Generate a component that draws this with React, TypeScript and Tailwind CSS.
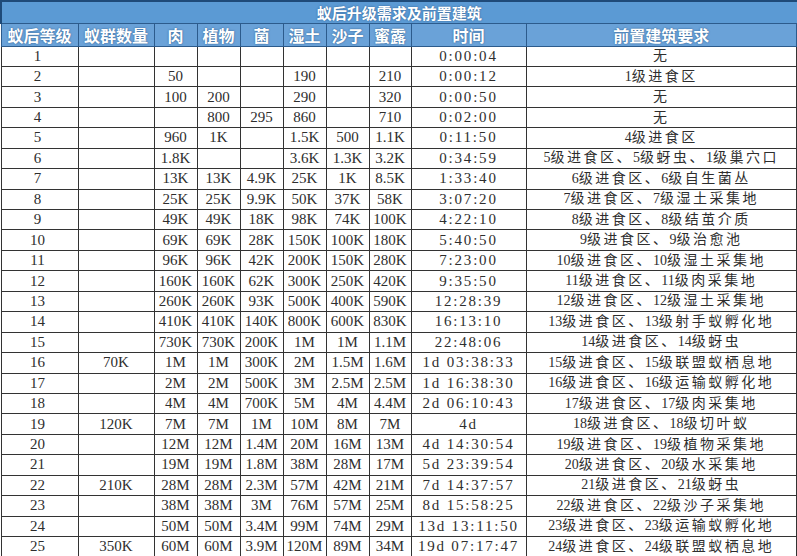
const headers = ["蚁后等级", "蚁群数量", "肉", "植物", "菌", "湿土", "沙子", "蜜露", "时间", "前置建筑要求"];

const widths = ["w-[77px]", "w-[76px]", "w-[43px]", "w-[43px]", "w-[43px]", "w-[43px]", "w-[43px]", "w-[42px]", "w-[115px]", "w-auto"];

// level, colony, meat, plant, fungus, soil, sand, honeydew, time, requirement
const rows: string[][] = [
  ["1", "", "", "", "", "", "", "", "0:00:04", "无"],
  ["2", "", "50", "", "", "190", "", "210", "0:00:12", "1级进食区"],
  ["3", "", "100", "200", "", "290", "", "320", "0:00:50", "无"],
  ["4", "", "", "800", "295", "860", "", "710", "0:02:00", "无"],
  ["5", "", "960", "1K", "", "1.5K", "500", "1.1K", "0:11:50", "4级进食区"],
  ["6", "", "1.8K", "", "", "3.6K", "1.3K", "3.2K", "0:34:59", "5级进食区、5级蚜虫、1级巢穴口"],
  ["7", "", "13K", "13K", "4.9K", "25K", "1K", "8.5K", "1:33:40", "6级进食区、6级自生菌丛"],
  ["8", "", "25K", "25K", "9.9K", "50K", "37K", "58K", "3:07:20", "7级进食区、7级湿土采集地"],
  ["9", "", "49K", "49K", "18K", "98K", "74K", "100K", "4:22:10", "8级进食区、8级结茧介质"],
  ["10", "", "69K", "69K", "28K", "150K", "100K", "180K", "5:40:50", "9级进食区、9级治愈池"],
  ["11", "", "96K", "96K", "42K", "200K", "150K", "280K", "7:23:00", "10级进食区、10级湿土采集地"],
  ["12", "", "160K", "160K", "62K", "300K", "250K", "420K", "9:35:50", "11级进食区、11级肉采集地"],
  ["13", "", "260K", "260K", "93K", "500K", "400K", "590K", "12:28:39", "12级进食区、12级湿土采集地"],
  ["14", "", "410K", "410K", "140K", "800K", "600K", "830K", "16:13:10", "13级进食区、13级射手蚁孵化地"],
  ["15", "", "730K", "730K", "200K", "1M", "1M", "1.1M", "22:48:06", "14级进食区、14级蚜虫"],
  ["16", "70K", "1M", "1M", "300K", "2M", "1.5M", "1.6M", "1d 03:38:33", "15级进食区、15级联盟蚁栖息地"],
  ["17", "", "2M", "2M", "500K", "3M", "2.5M", "2.5M", "1d 16:38:30", "16级进食区、16级运输蚁孵化地"],
  ["18", "", "4M", "4M", "700K", "5M", "4M", "4.4M", "2d 06:10:43", "17级进食区、17级肉采集地"],
  ["19", "120K", "7M", "7M", "1M", "10M", "8M", "7M", "4d", "18级进食区、18级切叶蚁"],
  ["20", "", "12M", "12M", "1.4M", "20M", "16M", "13M", "4d 14:30:54", "19级进食区、19级植物采集地"],
  ["21", "", "19M", "19M", "1.8M", "38M", "28M", "17M", "5d 23:39:54", "20级进食区、20级水采集地"],
  ["22", "210K", "28M", "28M", "2.3M", "57M", "42M", "21M", "7d 14:37:57", "21级进食区、21级蚜虫"],
  ["23", "", "38M", "38M", "3M", "76M", "57M", "25M", "8d 15:58:25", "22级进食区、22级沙子采集地"],
  ["24", "", "50M", "50M", "3.4M", "99M", "74M", "29M", "13d 13:11:50", "23级进食区、23级运输蚁孵化地"],
  ["25", "350K", "60M", "60M", "3.9M", "120M", "89M", "34M", "19d 07:17:47", "24级进食区、24级联盟蚁栖息地"],
];

function cellClass(i: number) {
  if (i === 0) return "text-[15px] pr-[4px]";
  if (i === 8) return "text-[15px] tracking-[1.8px]";
  if (i === 9) return "text-[14px]";
  return "text-[15px]";
}

// digits sit tight, the Chinese characters are spread out
function Requirement({ text }: { text: string }) {
  const parts = text.split(/(\d+)/).filter((p) => p !== "");
  return (
    <>
      {parts.map((p, i) =>
        /^\d+$/.test(p) ? (
          <span key={i} className="tracking-normal">{p}</span>
        ) : (
          <span key={i} className="tracking-[2.5px]">{p}</span>
        )
      )}
    </>
  );
}

export default function App() {
  return (
    <div className="w-[797px] h-[556px] overflow-hidden bg-white">
      <table className="w-[797px] table-fixed border-collapse font-['Liberation_Serif','Noto_Sans_CJK_SC',serif] text-[#2e2e2e]">
        <colgroup>
          {widths.map((w, i) => (
            <col key={i} className={w} />
          ))}
        </colgroup>
        <thead>
          {/* Title */}
          <tr className="h-[22px]">
            <th
              colSpan={10}
              className="border-t-2 border-l-2 border-[#1f4a78] bg-[#5b9ad4] p-0 text-center align-middle font-['Noto_Sans_CJK_SC',sans-serif] text-[15px] font-bold leading-none text-white [text-shadow:0_0_2px_#2c5a8a]"
            >
              蚁后升级需求及前置建筑
            </th>
          </tr>
          {/* Column headers */}
          <tr className="h-[23px]">
            {headers.map((h) => (
              <th
                key={h}
                className="border border-[#2c5b8c] bg-[#6aa2d8] p-0 text-center align-middle font-['Noto_Sans_CJK_SC',sans-serif] text-[16px] font-bold leading-none text-white [text-shadow:0_0_2px_#2c5a8a]"
              >
                {h}
              </th>
            ))}
          </tr>
        </thead>
        <tbody>
          {rows.map((r) => (
            <tr key={r[0]} className="h-[20.44px]">
              {r.map((c, i) => (
                <td
                  key={i}
                  className={`border border-[#333] p-0 text-center align-middle leading-none whitespace-nowrap overflow-hidden ${cellClass(i)}`}
                >
                  {i === 9 ? <Requirement text={c} /> : c}
                </td>
              ))}
            </tr>
          ))}
        </tbody>
      </table>
    </div>
  );
}
